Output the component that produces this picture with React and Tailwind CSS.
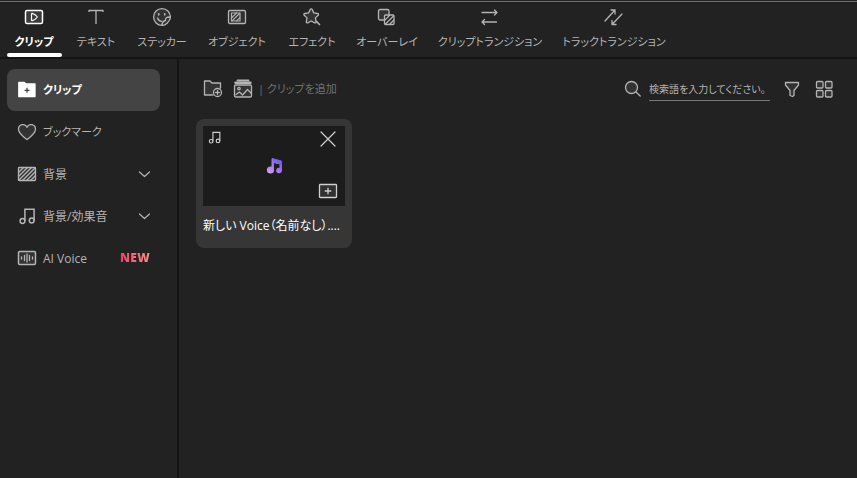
const Svg = ({ w = 20, h = 20, children, className = "" }) => (
  <svg
    width={w}
    height={h}
    viewBox={`0 0 ${w} ${h}`}
    fill="none"
    stroke="currentColor"
    strokeWidth="1.3"
    strokeLinecap="round"
    strokeLinejoin="round"
    className={`shrink-0 ${className}`}
    aria-hidden="true"
  >
    {children}
  </svg>
);

const ClipIcon = () => (
  <Svg>
    <rect x="1.5" y="3.5" width="17" height="13" rx="1.5" fill="#3c3c3c" strokeWidth="1.5" />
    <path d="M7.5 6.8v6.4c0 .4.3.5.7.4 2.200-.7 3.800-1.700 4.800-3.100.2-.3.2-.7 0-1-1-1.400-2.600-2.400-4.800-3.100-.4-.1-.7 0-.7.4z" strokeWidth="1.2" />
  </Svg>
);
const TextIcon = () => (
  <Svg>
    <path d="M3 5V3.5h14V5M10 3.5V17" strokeLinecap="butt" />
  </Svg>
);
const StickerIcon = () => (
  <Svg>
    <path d="M18.400 10A8.400 8.400 0 1 0 10 18.400" fill="#333" />
    <path d="M18.400 10c-3.800-.2-5.400 1.300-4.900 3.500-1.900.3-3.400 2-3.500 4.900 3 .6 8.400-4 8.400-8.400z" fill="#333" />
    <path d="M5.500 11c.6 1.900 2 3.100 4.300 3.300" />
    <path d="M6.700 6.800v.9M12.700 6.800v.9" strokeWidth="1.700" />
  </Svg>
);
const ObjectIcon = () => (
  <Svg>
    <rect x="1.5" y="3.5" width="17" height="13" rx="1.2" fill="#303030" />
    <rect x="4.5" y="6" width="8.5" height="8" strokeWidth="1.2" />
    <path d="M5 10.5 9.500 6M5.500 13.500l7-7M9.500 13.800l3.300-3.200" strokeWidth="1.1" />
  </Svg>
);
const EffectIcon = () => (
  <Svg>
    <path d="M8.300 2.400c.4-.8 1.400-.8 1.800 0l1.700 3.500 3.900.6c.8.1 1.100 1.100.5 1.700l-2.800 2.700.7 3.900c.1.800-.7 1.400-1.400 1L9.200 14l-3.500 1.800c-.7.4-1.500-.2-1.400-1l.7-3.900-2.800-2.700c-.6-.6-.3-1.600.5-1.700l3.900-.6z" fill="#333" />
    <path d="m14.500 14.500 3 3" strokeWidth="1.700" />
  </Svg>
);
const OverlayIcon = () => (
  <Svg>
    <rect x="1.500" y="2.500" width="10.500" height="10.500" rx="1.500" fill="#333" />
    <rect x="7.500" y="8" width="9.500" height="9.500" rx="1" fill="#222" />
    <path d="m8 13 4.500-4.500M8.500 17l8-8M12.700 17.200l4-4" />
  </Svg>
);
const ClipTransitionIcon = () => (
  <Svg>
    <path d="M2 5.500h15M14.500 3 17 5.500 14.500 8M16.500 15H2M4.500 12.500 2 15l2.500 2.500" />
  </Svg>
);
const TrackTransitionIcon = () => (
  <Svg>
    <path d="M1 14 11 3M7 3h4v4M18 7 8 17.500M8 13.500v4h4" />
  </Svg>
);

const FolderIcon = () => (
  <Svg>
    <path d="M1.800 2.500h5.500l1.700 1.500h9v12.500H1.800z" fill="currentColor" />
    <path d="M10 7.800v5M7.500 10.300h5" stroke="#444" strokeLinecap="butt" />
  </Svg>
);
const HeartIcon = () => (
  <Svg>
    <path d="M10 17.500C6 14.500 1.500 11.300 1.500 7.200 1.500 2.200 7.800.900 10 5.300 12.200.900 18.500 2.200 18.500 7.200c0 4.100-4.500 7.300-8.500 10.300z" fill="#333" />
  </Svg>
);
const HatchIcon = () => (
  <Svg>
    <rect x="1.500" y="3.500" width="17" height="13" rx=".8" fill="#333" />
    <path d="m2 8 4.500-4.500M2 12 10.500 3.500M2 16 14.500 3.500M5.500 16.500l12.500-12.500M9.500 16.500l9-9M13.500 16.500l5-5" strokeWidth="1.400" />
  </Svg>
);
const NoteIcon = ({ size = 20 }) => (
  <svg
    width={size}
    height={size}
    viewBox="0 0 20 20"
    fill="none"
    stroke="currentColor"
    strokeWidth="1.500"
    className="shrink-0"
    aria-hidden="true"
  >
    <circle cx="5.500" cy="15" r="2.400" />
    <circle cx="14.700" cy="14.500" r="2.400" />
    <path d="M7.900 15V3.200h9.200v11.300" />
  </svg>
);
const VoiceIcon = () => (
  <Svg>
    <rect x="1.500" y="3.500" width="17" height="13" rx="1.200" fill="#333" strokeWidth="1.500" />
    <path d="M4.500 9v2M7.500 7.500v5M10 6v8M12.500 7.500v5M15.500 9v2" strokeWidth="1.300" />
  </Svg>
);
const Chevron = () => (
  <Svg w={12} h={12}>
    <path d="m1.500 4 5 4.500 5-4.500" strokeWidth="1.200" />
  </Svg>
);

const TABS = [
  { label: "クリップ", Icon: ClipIcon, width: "w-[62px]", active: true },
  { label: "テキスト", Icon: TextIcon, width: "w-[62px]" },
  { label: "ステッカー", Icon: StickerIcon, width: "w-[70px]" },
  { label: "オブジェクト", Icon: ObjectIcon, width: "w-20" },
  { label: "エフェクト", Icon: EffectIcon, width: "w-[70px]" },
  { label: "オーバーレイ", Icon: OverlayIcon, width: "w-20" },
  { label: "クリップトランジション", Icon: ClipTransitionIcon, width: "w-[126px]" },
  { label: "トラックトランジション", Icon: TrackTransitionIcon, width: "w-[122px]" },
];

const CATEGORIES = [
  { label: "クリップ", Icon: FolderIcon, textSize: "text-[11px]", active: true },
  { label: "ブックマーク", Icon: HeartIcon, textSize: "text-[11px]" },
  { label: "背景", Icon: HatchIcon, textSize: "text-[12px]", expandable: true },
  { label: "背景/効果音", Icon: NoteIcon, textSize: "text-[12px]", expandable: true },
  { label: "AI Voice", Icon: VoiceIcon, textSize: "text-[12px]", isNew: true },
];

function Tab({ label, Icon, width, active }) {
  return (
    <button
      type="button"
      aria-current={active ? "page" : undefined}
      className={`flex h-full shrink-0 flex-col items-center pt-[5px] ${width} ${active ? "font-bold text-white" : "text-[#b4b4b4]"}`}
    >
      <Icon />
      <span className="mt-[7px] whitespace-nowrap text-[11px] leading-4">{label}</span>
      {active && <span className="mt-auto h-1 w-[55px] rounded-full bg-white" />}
    </button>
  );
}

function Category({ label, Icon, textSize, active, expandable, isNew }) {
  return (
    <button
      type="button"
      aria-expanded={expandable ? false : undefined}
      className={`flex h-[42px] w-full items-center rounded-lg px-[10px] text-left ${active ? "bg-[#444] font-bold text-white" : "text-[#b4b4b4]"}`}
    >
      <Icon />
      <span className={`ml-[6px] flex-1 whitespace-nowrap pt-px ${textSize}`}>{label}</span>
      {expandable && <Chevron />}
      {isNew && (
        <span className="bg-linear-to-r from-[#f03f63] to-[#f58d8b] bg-clip-text text-[12px] font-extrabold tracking-wide text-transparent">
          NEW
        </span>
      )}
    </button>
  );
}

function MediaCard() {
  return (
    <article className="w-[156px] rounded-lg bg-[#363636] px-[7px] pt-[7px] pb-[14px]">
      <div className="flex h-20 justify-between bg-[#1c1c1c] text-[#d0d0d0]">
        <div className="w-[38px] pt-1 pl-1">
          <NoteIcon size={15} />
        </div>
        <div className="flex items-center">
          <svg width="18" height="18" viewBox="0 0 18 18" aria-hidden="true">
            <defs>
              <linearGradient id="note" gradientUnits="userSpaceOnUse" x1="2" y1="16" x2="14" y2="4">
                <stop offset="0" stopColor="#dca0ee" />
                <stop offset="1" stopColor="#765cf0" />
              </linearGradient>
            </defs>
            <path
              d="M7 1.500 16.500 4v10h-1.500V7L8.500 5.500V14H7z"
              fill="url(#note)"
              stroke="url(#note)"
              strokeLinejoin="round"
            />
            <circle cx="5.500" cy="13" r="3.600" fill="url(#note)" />
            <circle cx="14" cy="13.500" r="2.800" fill="url(#note)" />
          </svg>
        </div>
        <div className="flex w-[38px] flex-col items-end justify-between pt-1 pr-[7px] pb-[5px]">
          <button type="button" aria-label="閉じる">
            <Svg w={20} h={18}>
              <path d="m3 2 14 14M17 2 3 16" strokeWidth="1.200" />
            </Svg>
          </button>
          <button type="button" aria-label="追加">
            <Svg>
              <rect x="1.500" y="3.500" width="17" height="13" rx=".8" fill="#303030" />
              <path d="M10 7.200v5.600M7.200 10h5.600" />
            </Svg>
          </button>
        </div>
      </div>
      <p className="mt-3 whitespace-nowrap text-[12px] leading-4 text-white">新しい Voice（名前なし）....</p>
    </article>
  );
}

export default function App() {
  return (
    <div className="flex min-h-screen flex-col bg-[#222] font-['Open_Sans','Noto_Sans_CJK_JP',sans-serif] [font-feature-settings:'palt']">
      <header className="mt-px h-[58px] border-t border-b-2 border-t-[#e03a5c] border-b-[#141414] pl-[3px]">
        <nav className="flex h-full">
          {TABS.map((tab) => (
            <Tab key={tab.label} {...tab} />
          ))}
        </nav>
      </header>
      <div className="flex flex-1">
        <aside className="w-[179px] shrink-0 border-r-2 border-[#141414] pt-[10px] pr-[17px] pl-[7px]">
          {CATEGORIES.map((category) => (
            <Category key={category.label} {...category} />
          ))}
        </aside>
        <main className="min-w-0 flex-1 pt-[14px] pr-[23px] pl-[17px]">
          <div className="flex h-8 items-center text-[#b4b4b4]">
            <button type="button" aria-label="フォルダーを追加" className="ml-[7px]">
              <Svg>
                <path d="M10 16H1.500V2h5.500l2 2h8.500v5" fill="#333" />
                <circle cx="14.500" cy="13.500" r="4" fill="#222" />
                <path d="M14.500 11.500v4M12.500 13.500h4" />
              </Svg>
            </button>
            <button type="button" aria-label="メディアを追加" className="ml-[10px]">
              <Svg>
                <path d="M4.500 1.500h11" strokeWidth="1.800" />
                <path d="M2.500 3.800h15" strokeWidth="2.400" />
                <rect x="1.500" y="6" width="17" height="12" rx="1.200" fill="#333" />
                <circle cx="6" cy="9.500" r="1.200" />
                <path d="m3 15.500 3.500-2.500 3 3 5-5.500 3.500 3.500" />
              </Svg>
            </button>
            <span className="ml-[5px] whitespace-nowrap pt-px text-[11px] text-[#707070]">| クリップを追加</span>
            <label className="ml-auto flex items-center gap-[6px]">
              <Svg>
                <circle cx="8.500" cy="8.500" r="6" fill="#333" />
                <path d="m13 13 4.200 4" />
              </Svg>
              <input
                type="text"
                aria-label="検索"
                placeholder="検索語を入力してください。"
                className="h-[23px] w-[121px] border-b border-[#777] bg-transparent text-[10px] outline-none [font-feature-settings:'palt'] placeholder:text-[#b4b4b4] placeholder:opacity-100"
              />
            </label>
            <button type="button" aria-label="フィルター" className="ml-3">
              <Svg>
                <path d="M3.500 3.500h13v2.500L12 11.500v5l-1.500 1-2.500-1v-5L3.500 6z" fill="#333" />
              </Svg>
            </button>
            <button type="button" aria-label="グリッド表示" className="ml-3">
              <Svg>
                <g fill="#333">
                  <rect x="2.500" y="2.500" width="6.500" height="6.500" rx="1" />
                  <rect x="11.500" y="2.500" width="6.500" height="6.500" rx="1" />
                  <rect x="2.500" y="11.500" width="6.500" height="6.500" rx="1" />
                  <rect x="11.500" y="11.500" width="6.500" height="6.500" rx="1" />
                </g>
              </Svg>
            </button>
          </div>
          <div className="mt-[14px] flex flex-wrap">
            <MediaCard />
          </div>
        </main>
      </div>
    </div>
  );
}
